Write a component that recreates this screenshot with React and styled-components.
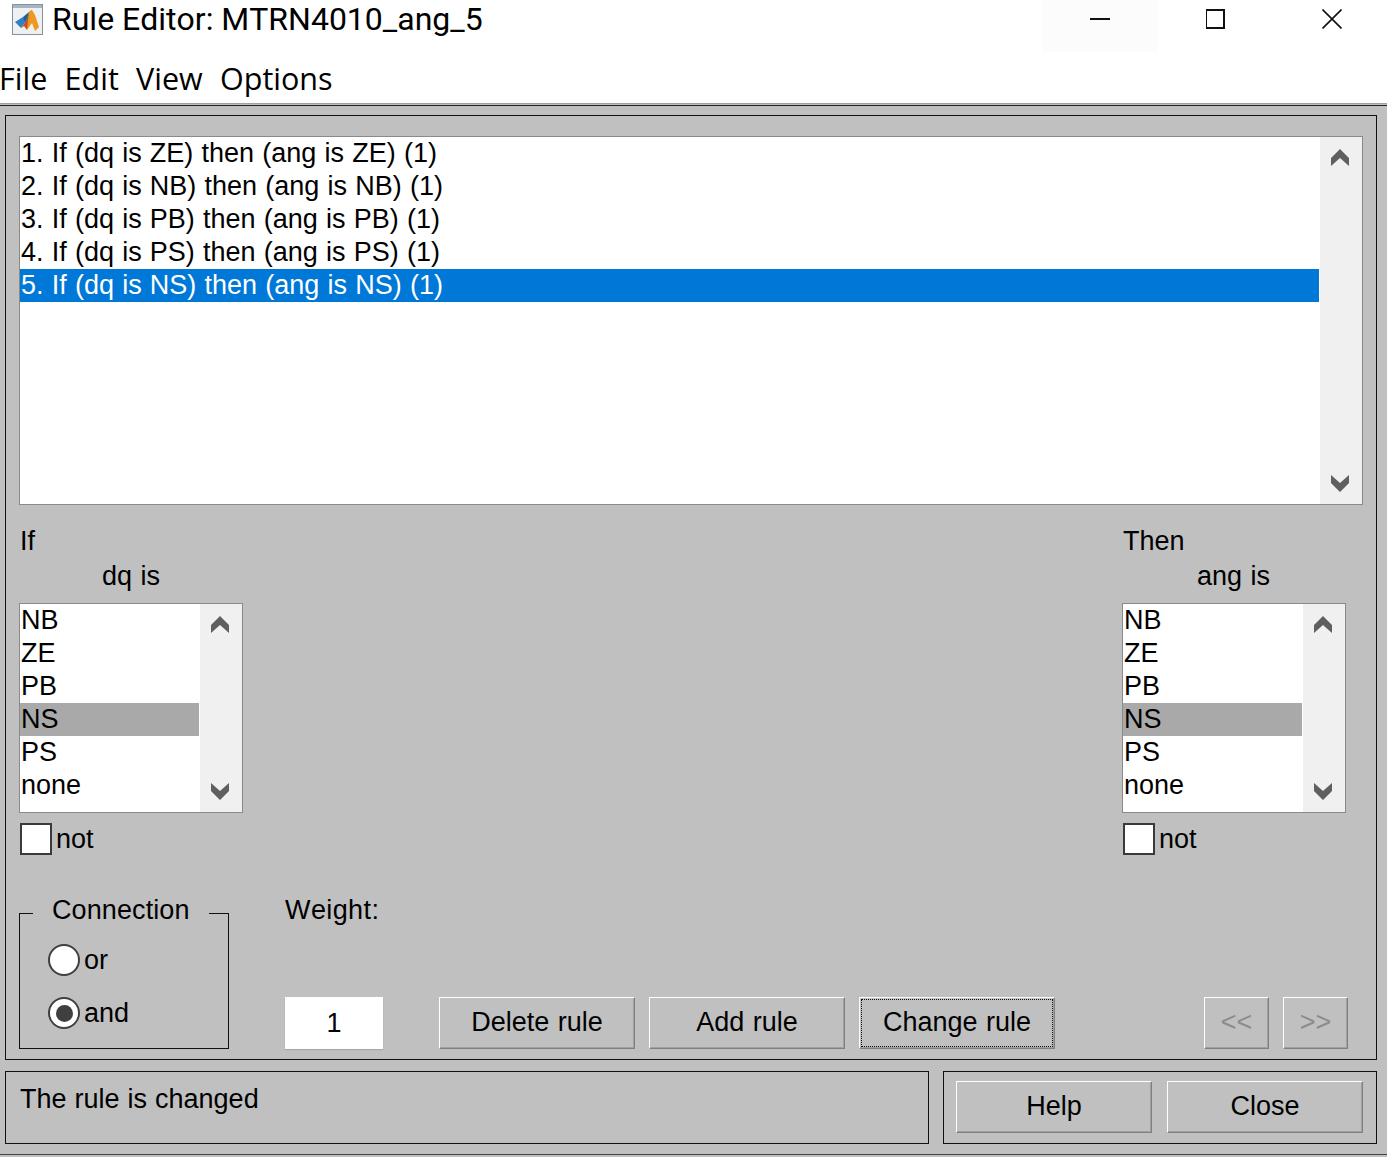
import React from "react";
import styled, { createGlobalStyle } from "styled-components";

const rules = [
  "1. If (dq is ZE) then (ang is ZE) (1)",
  "2. If (dq is NB) then (ang is NB) (1)",
  "3. If (dq is PB) then (ang is PB) (1)",
  "4. If (dq is PS) then (ang is PS) (1)",
  "5. If (dq is NS) then (ang is NS) (1)"
];
const terms = ["NB", "ZE", "PB", "NS", "PS", "none"];

const Chevron = ({ down }) => (
  <svg width="18" height="17" viewBox="0 0 18 17">
    <polygon
      fill="#5f5f5f"
      points={down ? "0,0 9,8 18,0 18,8 9,17 0,8" : "0,17 9,9 18,17 18,9 9,0 0,9"}
    />
  </svg>
);

const Logo = () => (
  <svg width="31" height="31" viewBox="0 0 31 31">
    <rect x="0.5" y="0.5" width="30" height="30" fill="#eef0f2" stroke="#87929c" />
    <rect x="1" y="1" width="29" height="3" fill="#a3b6c6" />
    <polygon points="3,18 11,13 14,17 9,24" fill="#2b82c4" />
    <polygon points="9,24 14,17 17,8 20,6 19,16 15,26 12,22" fill="#c9501a" />
    <polygon points="17,8 20,6 23,11 27,23 23,27 20,19 15,26" fill="#eb9a1e" />
    <polygon points="11,13 17,8 15,15 13,18" fill="#1f5f9c" />
  </svg>
);

const TermPicker = ({ heading, subject, indent }) => (
  <TermColumn>
    <Label>{heading}</Label>
    <Label $indent={indent}>{subject}</Label>
    <TermList>
      <Items>
        {terms.map(t => (
          <Item key={t} $selected={t === "NS"} $color="#a9a9a9" $dark>
            {t}
          </Item>
        ))}
      </Items>
      <ScrollTrack>
        <Chevron />
        <Chevron down />
      </ScrollTrack>
    </TermList>
    <NotRow>
      <CheckBox />
      not
    </NotRow>
  </TermColumn>
);

const RuleEditor = () => (
  <Page>
    <GlobalStyle />
    <TitleBar>
      <Logo />
      <Title>Rule Editor: MTRN4010_ang_5</Title>
      <WindowControls>
        <WindowButton $hover>
          <svg width="20" height="20" viewBox="0 0 20 20">
            <rect x="0" y="9" width="20" height="2" fill="#111" />
          </svg>
        </WindowButton>
        <WindowButton>
          <svg width="20" height="20" viewBox="1 0 20 20">
            <rect x="1" y="1" width="18" height="18" fill="none" stroke="#111" strokeWidth="2" />
          </svg>
        </WindowButton>
        <WindowButton>
          <svg width="20" height="20" viewBox="0 0 20 20">
            <path d="M0.5 0.5 L19.5 19.5 M19.5 0.5 L0.5 19.5" stroke="#111" strokeWidth="1.6" />
          </svg>
        </WindowButton>
      </WindowControls>
    </TitleBar>
    <MenuBar>
      <MenuItem>File</MenuItem>
      <MenuItem>Edit</MenuItem>
      <MenuItem>View</MenuItem>
      <MenuItem>Options</MenuItem>
    </MenuBar>
    <Body>
      <MainPanel>
        <ListBox $height={369}>
          <Items>
            {rules.map((rule, i) => (
              <Item key={rule} $selected={i === 4} $color="#0078d7">
                {rule}
              </Item>
            ))}
          </Items>
          <ScrollTrack>
            <Chevron />
            <Chevron down />
          </ScrollTrack>
        </ListBox>
        <TermRow>
          <TermPicker heading="If" subject="dq is" indent={82} />
          <TermPicker heading="Then" subject="ang is" indent={74} />
        </TermRow>
        <ControlRow>
          <Connection>
            <Legend>Connection</Legend>
            <RadioRow>
              <Radio />
              or
            </RadioRow>
            <RadioRow>
              <Radio $checked />
              and
            </RadioRow>
          </Connection>
          <WeightColumn>
            <WeightLabel>Weight:</WeightLabel>
            <WeightInput>1</WeightInput>
          </WeightColumn>
          <RuleButtons>
            <Button>Delete rule</Button>
            <Button>Add rule</Button>
            <Button $focused>
              <FocusRing>Change rule</FocusRing>
            </Button>
          </RuleButtons>
          <NavButtons>
            <NavButton>&lt;&lt;</NavButton>
            <NavButton>&gt;&gt;</NavButton>
          </NavButtons>
        </ControlRow>
      </MainPanel>
      <Footer>
        <StatusPanel>The rule is changed</StatusPanel>
        <HelpPanel>
          <Button>Help</Button>
          <Button>Close</Button>
        </HelpPanel>
      </Footer>
    </Body>
  </Page>
);

const GlobalStyle = createGlobalStyle`
  html, body {
    margin: 0;
    padding: 0;
    background: #c0c0c0;
  }
  * {
    box-sizing: border-box;
  }
`;

const Page = styled.div`
  width: 1387px;
  height: 1157px;
  overflow: hidden;
  display: flex;
  flex-direction: column;
  background: #c0c0c0;
  font-family: "Liberation Sans", Arial, sans-serif;
  font-size: 27px;
  font-kerning: none;
  color: #000;
`;

const TitleBar = styled.div`
  display: flex;
  align-items: center;
  height: 52px;
  padding: 0 0 14px 12px;
  background: #fff;
`;

const Title = styled.div`
  margin-left: 9px;
  font-family: Roboto, sans-serif;
  font-size: 32px;
  line-height: 38px;
`;

const WindowControls = styled.div`
  display: flex;
  margin-left: auto;
  margin-right: -3px;
  margin-bottom: -14px;
  height: 52px;
`;

const WindowButton = styled.div`
  display: flex;
  justify-content: center;
  width: 116px;
  padding-top: 9px;
  background: ${props => (props.$hover ? "#fcfcfc" : "#fff")};
`;

const MenuBar = styled.div`
  display: flex;
  gap: 17.3px;
  align-items: center;
  height: 52px;
  margin-left: -1px;
  border-bottom: 1px solid #a0a0a0;
  background: #fff;
  font-family: "Open Sans", sans-serif;
  font-size: 30.5px;
`;

const MenuItem = styled.div`
  line-height: 52px;
`;

const Body = styled.div`
  display: flex;
  flex-direction: column;
  margin-top: 1px;
  padding: 9px 10px 10px 5px;
  border-top: 1px solid #222;
  border-bottom: 1px solid #444;
  background: #c0c0c0;
`;

const MainPanel = styled.div`
  display: flex;
  flex-direction: column;
  height: 945px;
  padding: 20px 13px 0;
  border: 1px solid #111;
`;

const ListBox = styled.div`
  display: flex;
  height: ${props => props.$height}px;
  background: #fff;
  border: 1px solid #8a8a8a;
`;

const Items = styled.div`
  flex: 1;
  padding-right: 1px;
  min-width: 0;
`;

const Item = styled.div`
  height: 33px;
  padding-left: 1px;
  line-height: 33px;
  white-space: nowrap;
  word-spacing: 0.7px;
  background: ${props => (props.$selected ? props.$color : "transparent")};
  color: ${props => (props.$selected && !props.$dark ? "#fff" : "#000")};
`;

const ScrollTrack = styled.div`
  display: flex;
  flex-direction: column;
  justify-content: space-between;
  align-items: center;
  width: 42px;
  padding: 12px 2px 12px 0;
  background: #f0f0f0;
`;

const TermRow = styled.div`
  display: flex;
  justify-content: space-between;
  margin-top: 19px;
  padding-right: 17px;
`;

const TermColumn = styled.div`
  display: flex;
  flex-direction: column;
  width: 224px;
`;

const Label = styled.div`
  padding-left: ${props => (props.$indent || 0) + 1}px;
  line-height: 35px;
  word-spacing: 1px;
`;

const TermList = styled(ListBox)`
  height: 210px;
  margin-top: 9px;
`;

const NotRow = styled.div`
  display: flex;
  align-items: center;
  gap: 4px;
  height: 32px;
  margin-top: 10px;
  padding-left: 1px;
`;

const CheckBox = styled.div`
  width: 32px;
  height: 32px;
  background: #fff;
  border: 2px solid #3a3a3a;
`;

const ControlRow = styled.div`
  display: flex;
  align-items: flex-end;
  height: 156px;
  margin-top: 38px;
`;

const Connection = styled.div`
  position: relative;
  display: flex;
  flex-direction: column;
  gap: 21px;
  width: 210px;
  height: 136px;
  padding: 30px 0 0 28px;
  border: 1px solid #111;
`;

const Legend = styled.div`
  position: absolute;
  top: -20px;
  left: 13px;
  padding: 0 19px;
  line-height: 33px;
  letter-spacing: 0.1px;
  background: #c0c0c0;
`;

const RadioRow = styled.div`
  display: flex;
  align-items: center;
  gap: 4px;
  height: 32px;
`;

const Radio = styled.div`
  display: flex;
  justify-content: center;
  align-items: center;
  width: 32px;
  height: 32px;
  border-radius: 50%;
  border: 2px solid #3f3f3f;
  background: #fff;
  &::after {
    content: "";
    width: 17px;
    height: 17px;
    border-radius: 50%;
    background: ${props => (props.$checked ? "#3f3f3f" : "transparent")};
  }
`;

const WeightColumn = styled.div`
  display: flex;
  flex-direction: column;
  justify-content: space-between;
  align-self: stretch;
  width: 98px;
  margin-left: 56px;
`;

const WeightLabel = styled.div`
  line-height: 35px;
  white-space: nowrap;
  letter-spacing: 0.4px;
`;

const WeightInput = styled.div`
  height: 52px;
  line-height: 52px;
  text-align: center;
  background: #fff;
  box-shadow: 0 1px 1px rgba(0, 0, 0, 0.12);
`;

const RuleButtons = styled.div`
  display: flex;
  gap: 14px;
  margin-left: 56px;
`;

const Button = styled.div`
  display: flex;
  justify-content: center;
  align-items: center;
  width: 196px;
  height: 52px;
  word-spacing: 1px;
  border: 1px solid;
  border-color: #fff #808080 #808080 #fff;
  box-shadow: inset -1px -1px 0 #a0a0a0;
  background: #c0c0c0;
  padding: ${props => (props.$focused ? "2px" : "0 0 2px")};
`;

const FocusRing = styled.div`
  display: flex;
  justify-content: center;
  align-items: center;
  width: 100%;
  height: 100%;
  padding-bottom: 2px;
  outline: 1px dotted #111;
`;

const NavButtons = styled.div`
  display: flex;
  gap: 14px;
  margin-left: auto;
  margin-right: 15px;
`;

const NavButton = styled(Button)`
  width: 65px;
  color: #8c8c8c;
`;

const Footer = styled.div`
  display: flex;
  gap: 14px;
  height: 73px;
  margin-top: 11px;
`;

const StatusPanel = styled.div`
  width: 924px;
  padding: 11px 0 0 14px;
  line-height: 33px;
  word-spacing: 0.5px;
  border: 1px solid #111;
`;

const HelpPanel = styled.div`
  display: flex;
  flex: 1;
  gap: 15px;
  padding: 9px 0 0 12px;
  border: 1px solid #111;
`;

export default RuleEditor;
